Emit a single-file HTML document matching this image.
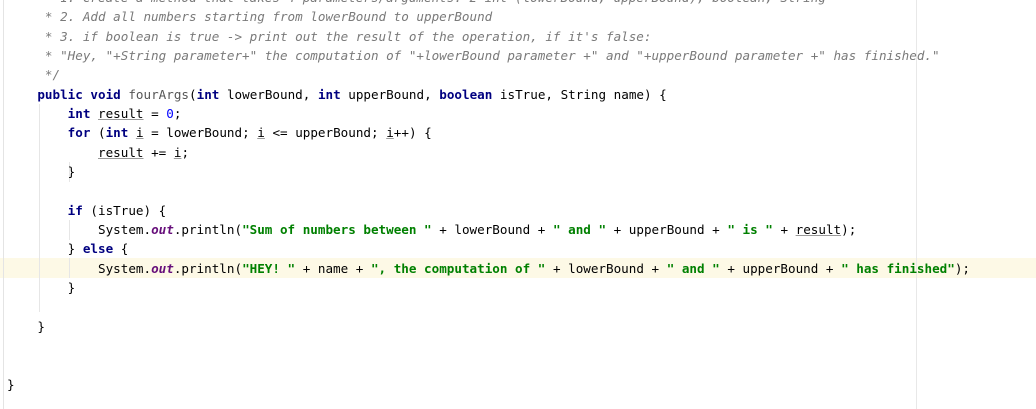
<!DOCTYPE html>
<html><head><style>
html,body{margin:0;padding:0;background:#fff;width:1036px;height:409px;overflow:hidden;position:relative}
pre{position:absolute;left:7px;top:-12px;margin:0;font-family:"DejaVu Sans Mono","Liberation Mono",monospace;font-size:12.6px;line-height:19.35px;color:#000;z-index:2}
.c{color:#7a7a7a;font-style:italic}
.k{color:#000080;font-weight:bold}
.s{color:#008000;font-weight:bold}
.n{color:#0000ff}
.o{color:#660e7a;font-style:italic;font-weight:bold}
.g{color:#555}
.u{text-decoration:underline;text-decoration-color:#999}
.hl{position:absolute;left:0;top:258px;width:1036px;height:20px;background:#fdf9e6;z-index:0}
.margin{position:absolute;left:916px;top:0;width:1px;height:409px;background:#e8e8e8;z-index:1}
.gut{position:absolute;left:3px;top:0;width:1px;height:409px;background:#e4e4e4;z-index:1}
.ig{position:absolute;width:1px;background:#e6e6e6;z-index:1}
</style></head><body>
<div class="hl"></div>
<div class="margin"></div>
<div class="gut"></div>
<div class="ig" style="left:39px;top:104px;height:208px"></div>
<div class="ig" style="left:69px;top:162px;height:20px"></div>
<div class="ig" style="left:69px;top:220px;height:20px"></div>
<div class="ig" style="left:69px;top:258px;height:20px"></div>
<pre><span class="c">     * 1. Create a method that takes 4 parameters/arguments: 2 int (lowerBound, upperBound), boolean, String</span>
<span class="c">     * 2. Add all numbers starting from lowerBound to upperBound</span>
<span class="c">     * 3. if boolean is true -&gt; print out the result of the operation, if it's false:</span>
<span class="c">     * "Hey, "+String parameter+" the computation of "+lowerBound parameter +" and "+upperBound parameter +" has finished."</span>
<span class="c">     */</span>
    <span class="k">public void</span> <span class="g">fourArgs</span>(<span class="k">int</span> lowerBound, <span class="k">int</span> upperBound, <span class="k">boolean</span> isTrue, String name) {
        <span class="k">int</span> <span class="u">result</span> = <span class="n">0</span>;
        <span class="k">for</span> (<span class="k">int</span> <span class="u">i</span> = lowerBound; <span class="u">i</span> &lt;= upperBound; <span class="u">i</span>++) {
            <span class="u">result</span> += <span class="u">i</span>;
        }

        <span class="k">if</span> (isTrue) {
            System.<span class="o">out</span>.println(<span class="s">"Sum of numbers between "</span> + lowerBound + <span class="s">" and "</span> + upperBound + <span class="s">" is "</span> + <span class="u">result</span>);
        } <span class="k">else</span> {
            System.<span class="o">out</span>.println(<span class="s">"HEY! "</span> + name + <span class="s">", the computation of "</span> + lowerBound + <span class="s">" and "</span> + upperBound + <span class="s">" has finished"</span>);
        }

    }


}</pre>
</body></html>
